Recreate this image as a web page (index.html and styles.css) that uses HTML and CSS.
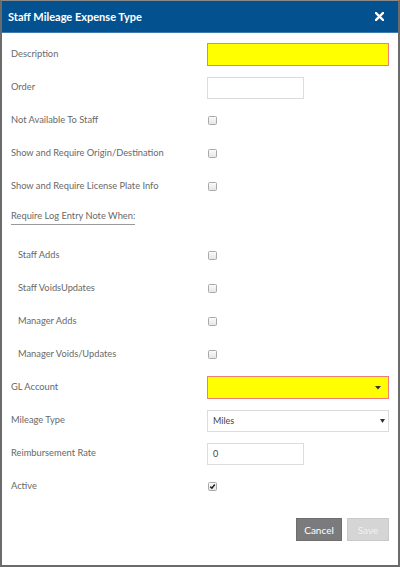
FILE: index.html
```html
<!DOCTYPE html>
<html>
<head>
<meta charset="utf-8">
<link rel="stylesheet" href="styles.css">
</head>
<body>
<div class="modal">
  <div class="header">
    <span class="title">Staff Mileage Expense Type</span>
    <svg class="close" width="9" height="9" viewBox="0 0 9 9"><path d="M1 1L8 8M8 1L1 8" stroke="#fff" stroke-width="2.4" stroke-linecap="square"/></svg>
  </div>
  <div class="body">
    <div class="row"><span class="label">Description</span><span class="input wide required"></span></div>
    <div class="row"><span class="label">Order</span><span class="input short"></span></div>
    <div class="row"><span class="label">Not Available To Staff</span><span class="check"></span></div>
    <div class="row"><span class="label">Show and Require Origin/Destination</span><span class="check"></span></div>
    <div class="row"><span class="label">Show and Require License Plate Info</span><span class="check"></span></div>
    <div class="row section"><span class="label underline">Require Log Entry Note When:</span></div>
    <div class="row"><span class="label indent">Staff Adds</span><span class="check"></span></div>
    <div class="row"><span class="label indent">Staff VoidsUpdates</span><span class="check"></span></div>
    <div class="row"><span class="label indent">Manager Adds</span><span class="check"></span></div>
    <div class="row"><span class="label indent">Manager Voids/Updates</span><span class="check"></span></div>
    <div class="row"><span class="label">GL Account</span><span class="input wide required select"><span></span><svg width="6" height="4" viewBox="0 0 6 4"><path d="M0 0H6L3 3.5Z" fill="#333"/></svg></span></div>
    <div class="row"><span class="label">Mileage Type</span><span class="input wide select plain"><span class="value">Miles</span><svg width="5" height="4" viewBox="0 0 5 4"><path d="M0 0H5L2.5 4Z" fill="#333"/></svg></span></div>
    <div class="row"><span class="label">Reimbursement Rate</span><span class="input short"><span class="value">0</span></span></div>
    <div class="row"><span class="label">Active</span><span class="check checked"><svg width="7" height="7" viewBox="0 0 7 7"><path d="M1.3 3.6L2.9 5.2L5.8 1.5" stroke="#222" stroke-width="1.5" fill="none"/></svg></span></div>
    <div class="footer">
      <span class="btn cancel">Cancel</span>
      <span class="btn save">Save</span>
    </div>
  </div>
</div>
</body>
</html>
```
FILE: styles.css
```css
html, body {
  margin: 0;
  padding: 0;
  background: #fff;
}
.modal {
  width: 400px;
  height: 567px;
  box-sizing: border-box;
  border: 2px solid #6b6b6b;
  border-top: 1px solid #8a8a8a;
  font-family: Lato, "Noto Sans", sans-serif;
  display: flex;
  flex-direction: column;
  background: #fff;
}
.header {
  height: 31px;
  background: #03528f;
  display: flex;
  align-items: center;
  justify-content: space-between;
  padding: 0 14px 0 6px;
  border-bottom: 1px solid #3d7ab0;
}
.title {
  color: #fff;
  font-weight: bold;
  font-size: 11px;
}
.close {
  display: block;
}
.body {
  padding: 5px 9px 0 9px;
  display: flex;
  flex-direction: column;
}
.row {
  height: 33px;
  display: grid;
  grid-template-columns: 196px 1fr;
  align-items: center;
}
.label {
  font-size: 9.3px;
  color: #686868;
  margin-top: -2px;
}
.indent {
  padding-left: 7px;
}
.section {
  height: 36px;
  align-items: start;
}
.underline {
  margin-top: 7px;
  justify-self: start;
  padding-bottom: 3px;
  border-bottom: 1px solid #9a9a9a;
}
.input {
  height: 22px;
  box-sizing: border-box;
  border: 1px solid #dcdcdc;
  background: #fff;
  display: flex;
  align-items: center;
  justify-content: space-between;
  padding: 0 5px 0 5px;
}
.wide { width: 182px; }
.short { width: 97px; }
.required {
  background: #ffff00;
  border: 1px solid #ef7f74;
  height: 23px;
}
.select svg { display: block; }
.select.required { padding-right: 7px; }
.plain { padding-right: 3px; }
.value {
  font-size: 9px;
  color: #444;
}
.check {
  width: 7px;
  height: 7px;
  border: 1px solid #a9a9a9;
  border-radius: 1.5px;
  background: linear-gradient(#fafafa, #e6e6e6);
  position: relative;
  margin-left: 1px;
  margin-top: -1px;
}
.check svg {
  position: absolute;
  left: 0;
  top: 0;
}
.footer {
  display: flex;
  justify-content: flex-end;
  gap: 5px;
  margin-top: 15px;
}
.btn {
  height: 23px;
  box-sizing: border-box;
  display: flex;
  align-items: center;
  justify-content: center;
  font-size: 10px;
}
.cancel {
  width: 46px;
  background: #7b7b7d;
  color: #fff;
  border: 1px solid #6e6e6e;
}
.save {
  width: 42px;
  background: #d5d5d5;
  color: #f2f2f2;
  border: 1px solid #cacaca;
}
```
